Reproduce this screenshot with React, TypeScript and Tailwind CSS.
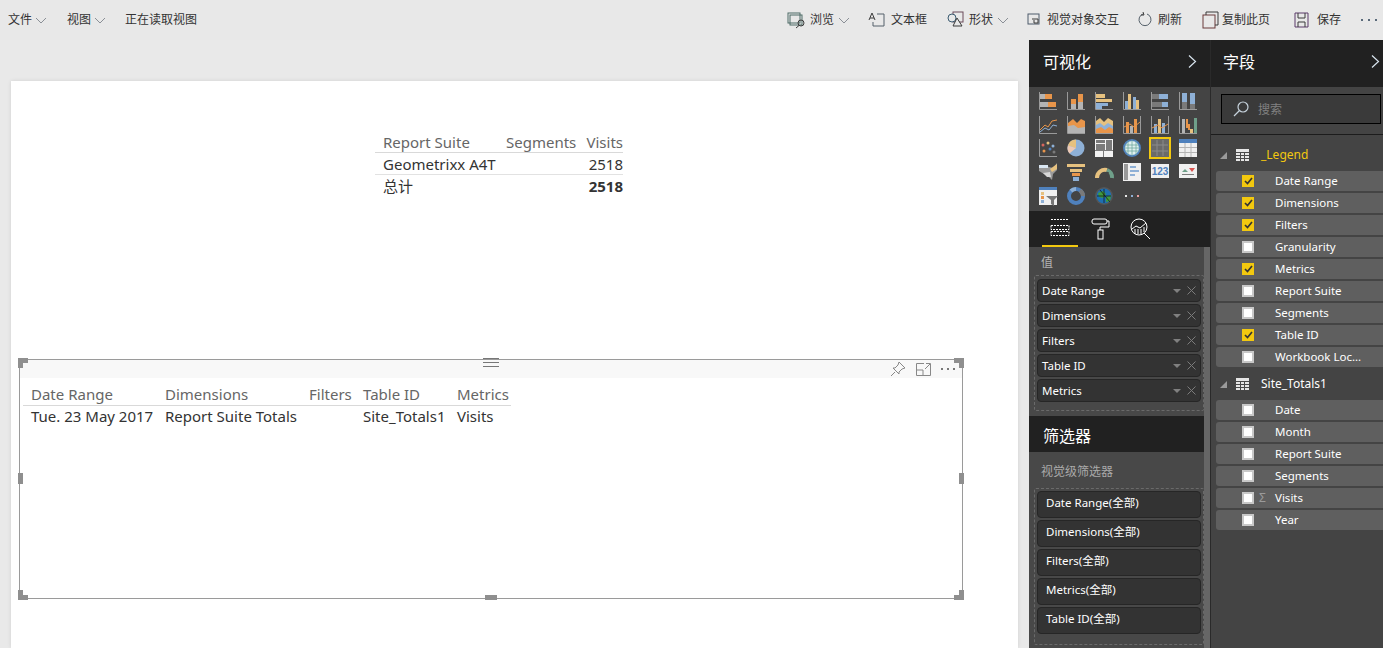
import { ReactNode } from 'react';

const font = { ui: 'font-["Noto_Sans","Noto_Sans_CJK_SC",sans-serif]' };

const O = '#e8954a';
const G = '#b4b4b4';
const T = '#e6c17f';
const B = '#8eb0d6';
const D = '#7a7a7a';
const AX = '#9a9a9a';

function R({ x, y, w, h, f }: { x: number; y: number; w: number; h: number; f: string }) {
  return <rect x={x} y={y} width={w} height={h} fill={f} />;
}

function Axes() {
  return <path d="M0.5 0V17.5H18" stroke={AX} fill="none" />;
}

const vizIcons: ReactNode[] = [
  <><Axes /><R x={1} y={2} w={5} h={5} f={G} /><R x={6} y={2} w={7} h={5} f={O} /><R x={1} y={10} w={8} h={5} f={G} /><R x={9} y={10} w={8} h={5} f={O} /></>,
  <><Axes /><R x={4} y={7} w={5} h={5} f={O} /><R x={4} y={12} w={5} h={5} f={G} /><R x={11} y={2} w={5} h={8} f={O} /><R x={11} y={10} w={5} h={7} f={G} /></>,
  <><Axes /><R x={1} y={2} w={9} h={4} f={T} /><R x={1} y={7} w={16} h={3} f={T} /><R x={1} y={11} w={12} h={3} f={B} /><R x={1} y={14} w={6} h={3} f={B} /></>,
  <><Axes /><R x={2} y={9} w={3} h={8} f={B} /><R x={5} y={2} w={3} h={15} f={T} /><R x={10} y={5} w={3} h={12} f={B} /><R x={13} y={8} w={3} h={9} f={T} /></>,
  <><Axes /><R x={1} y={2} w={7} h={5} f={D} /><R x={8} y={2} w={9} h={5} f={B} /><R x={1} y={10} w={10} h={5} f={D} /><R x={11} y={10} w={6} h={5} f={B} /></>,
  <><Axes /><R x={3} y={1} w={5} h={9} f={B} /><R x={3} y={10} w={5} h={7} f={D} /><R x={11} y={1} w={5} h={11} f={B} /><R x={11} y={12} w={5} h={5} f={D} /></>,
  <><Axes /><path d="M1 14L6 9L9 11L13 5L18 4" stroke={O} fill="none" /><path d="M1 16L6 12L10 14L14 9L18 10" stroke={B} fill="none" /></>,
  <><Axes /><path d="M1 17V7L6 3L10 7L14 3L18 5V17Z" fill={O} /><path d="M1 17V10L7 9L11 12L18 11V17Z" fill={G} /></>,
  <><Axes /><path d="M1 17V5L5 2L9 6L13 2L18 5V17Z" fill={T} /><path d="M1 15V9L5 7L9 10L13 7L18 10V15Z" fill={B} /><path d="M1 17V13L6 11L10 14L14 11L18 13V17Z" fill={O} /></>,
  <><path d="M.5 0V17.5H18M17.5 0V17" stroke={AX} fill="none" /><R x={3} y={6} w={3} h={11} f={O} /><R x={7} y={10} w={3} h={7} f={G} /><R x={11} y={3} w={3} h={14} f={O} /><path d="M1 11L7 8L11 11L17 6" stroke={O} fill="none" /></>,
  <><path d="M.5 0V17.5H18M17.5 0V17" stroke={AX} fill="none" /><R x={3} y={8} w={3} h={9} f={B} /><R x={7} y={3} w={3} h={14} f={T} /><R x={11} y={7} w={3} h={10} f={B} /><path d="M1 12L7 9L11 12L17 8" stroke={O} fill="none" /></>,
  <><Axes /><R x={3} y={3} w={3} h={14} f={G} /><R x={7} y={3} w={2} h={9} f={O} /><R x={9} y={8} w={2} h={6} f={O} /><R x={11} y={13} w={3} h={4} f={T} /><R x={15} y={2} w={3} h={15} f={'#6fa08a'} /></>,
  <><Axes /><circle cx="4" cy="6" r="1.5" fill="#d9665c" /><circle cx="9" cy="4" r="1.5" fill={T} /><circle cx="14" cy="7" r="1.5" fill={B} /><circle cx="5" cy="12" r="1.5" fill={O} /><circle cx="11" cy="10" r="1.5" fill={'#4f81bd'} /><circle cx="15" cy="13" r="1.5" fill={D} /></>,
  <><circle cx="9" cy="9" r="8.5" fill={B} /><path d="M9 9V.5A8.5 8.5 0 0 0 .9 6.5Z" fill={T} /><path d="M9 9L.9 6.5A8.5 8.5 0 0 0 2.5 14.5Z" fill="#edc9b5" /></>,
  <><rect width="18" height="18" fill="#f2f2f2" /><R x={1} y={1} w={9} h={3} f={D} /><R x={1} y={5} w={9} h={6} f={D} /><R x={11} y={1} w={6} h={10} f={D} /><path d="M0 11.5H18M8.5 11.5V18" stroke={D} /></>,
  <><circle cx="9" cy="9" r="8" fill="#dff0ee" stroke="#4f81bd" strokeWidth="2" /><path d="M2 6H16M1 9H17M2 12H16M9 1V17M5 2V16M13 2V16" stroke="#6fa8a0" strokeWidth=".8" fill="none" /></>,
  <><rect x="1" y="1" width="20" height="20" fill="#6a6a6a" stroke="#f2c80f" strokeWidth="2" /><path d="M3 8H19M3 14H19M8 3V19M14 3V19" stroke="#8a8a8a" /></>,
  <><rect width="18" height="18" fill="#f0f0f0" /><R x={0} y={0} w={18} h={4} f={'#4f81bd'} /><path d="M0 8.5H18M0 13.5H18M6 4V18M12 4V18" stroke={G} /></>,
  <><path d="M0 4L4 2L10 4L14 5L18 0V7L14 11L13 17L9 13L5 11L0 8Z" fill="#9a9a9a" /><path d="M0 2H9V5H0Z" fill="#d9e6f2" /><path d="M11 6L18 1V6L13 9Z" fill={T} /><path d="M4 10L11 9L12 14L8 14Z" fill="#d8d8d8" /></>,
  <><R x={0} y={1} w={18} h={3} f={T} /><R x={3} y={6} w={12} h={3} f={T} /><R x={5} y={10} w={8} h={3} f={O} /><R x={6} y={14} w={6} h={4} f={B} /></>,
  <><path d="M2 15A8 8 0 0 1 12 7" stroke={T} strokeWidth="4" fill="none" /><path d="M12 7A8 8 0 0 1 17 15" stroke="#6fa08a" strokeWidth="4" fill="none" /><path d="M11 15L13 9" stroke="#444" strokeWidth="2" /></>,
  <><rect width="18" height="18" fill="#f0f0f0" /><R x={1} y={1} w={4} h={16} f={'#9a9a9a'} /><R x={7} y={3} w={6} h={2} f={B} /><R x={7} y={7} w={9} h={2} f={B} /><R x={7} y={11} w={5} h={2} f={B} /></>,
  <><rect y="1" width="18" height="14" fill="#f0f0f0" /><text x="9" y="12" textAnchor="middle" fontSize="10" fontWeight="700" fill="#4f81bd" fontFamily="Liberation Sans">123</text></>,
  <><rect y="1" width="18" height="14" fill="#f0f0f0" /><path d="M3 9L6 6L9 9Z" fill="#6fa08a" /><path d="M10 5H16L13 9Z" fill="#d9534f" /><R x={3} y={11} w={12} h={1} f={D} /></>,
  <><rect width="18" height="18" fill="#f0f0f0" /><R x={0} y={0} w={18} h={3} f={'#4f81bd'} /><R x={2} y={5} w={3} h={3} f={T} /><R x={2} y={9} w={3} h={3} f={O} /><R x={2} y={13} w={3} h={3} f={B} /><path d="M7 9H19L15 13V19L12 17V13Z" fill="#777" /></>,
  <><circle cx="9" cy="9" r="7" fill="none" stroke="#4f81bd" strokeWidth="4" /><path d="M4 4A7 7 0 0 1 9 2" stroke={B} strokeWidth="4" fill="none" /><path d="M13 3.5A7 7 0 0 1 16 9" stroke={D} strokeWidth="4" fill="none" /></>,
  <><circle cx="9" cy="9" r="9" fill="#555" /><circle cx="9" cy="9" r="7.5" fill="#1f6fb2" /><path d="M3 6L8 4L11 7L8 11L4 10ZM11 10L16 8L15 14L11 15Z" fill="#3f9a3f" /><path d="M5 3L15 15M2 9H16M9 2V16" stroke="#111" strokeWidth=".7" /></>,
  <><R x={2} y={8} w={2} h={2} f={'#e8e8e8'} /><R x={8} y={8} w={2} h={2} f={'#8eb0d6'} /><R x={14} y={8} w={2} h={2} f={'#e8a0a0'} /></>,
];

function Chevron({ className = '' }: { className?: string }) {
  return (
    <svg width="12" height="7" viewBox="0 0 12 7" className={className} fill="none" stroke="#8a8f96">
      <path d="M1 1L6 6L11 1" />
    </svg>
  );
}

function TopIcon({ children, w = 18 }: { children: ReactNode; w?: number }) {
  return (
    <svg width={w} height="18" viewBox={`0 0 ${w} 18`} fill="none" stroke="#3b3b3b" strokeWidth="1">
      {children}
    </svg>
  );
}

function PanelChevron() {
  return (
    <svg width="9" height="13" viewBox="0 0 9 13" fill="none" stroke="#d8e4ee" strokeWidth="1.2">
      <path d="M1 .5L7.5 6.5L1 12.5" />
    </svg>
  );
}

function Handle({ className }: { className: string }) {
  return <div className={`absolute bg-[#8f8f8f] ${className}`} />;
}

// L shaped grip on the corners of the selected visual
function Corner({ className }: { className: string }) {
  return (
    <svg width="10" height="10" viewBox="0 0 10 10" className={`absolute ${className}`}>
      <path d="M0 0H10V5H5V10H0Z" fill="#8f8f8f" />
    </svg>
  );
}

function ValuePill({ label }: { label: string }) {
  return (
    <div className="flex h-[23px] items-center rounded-[4px] border border-[#262626] bg-[#333333] pl-[4px] pr-[3px] text-[11.5px] text-white">
      <span className="flex-1">{label}</span>
      <svg width="8" height="4" viewBox="0 0 8 4" className="mr-[6px]"><path d="M0 0H8L4 4Z" fill="#808080" /></svg>
      <svg width="9" height="9" viewBox="0 0 9 9" stroke="#7c7c7c" fill="none" className="mr-[1px]"><path d="M.5 .5L8.5 8.5M8.5 .5L.5 8.5" /></svg>
    </div>
  );
}

function FilterPill({ label }: { label: string }) {
  return (
    <div className="h-[27px] rounded-[4px] border border-[#262626] bg-[#333333] pl-[8px] text-[11.5px] leading-[22px] text-white">
      {label}
    </div>
  );
}

function Field({ label, checked, sigma }: { label: string; checked?: boolean; sigma?: boolean }) {
  return (
    <div className="flex h-[20px] items-center rounded-l-[3px] bg-[#5f5f5f] text-[11.5px] text-white">
      {checked ? (
        <span className="ml-[26px] flex h-[12px] w-[12px] items-center justify-center bg-[#f2c80f]">
          <svg width="9" height="8" viewBox="0 0 9 8" fill="none" stroke="#333" strokeWidth="1.7"><path d="M1 4L3.5 6.5L8 1" /></svg>
        </span>
      ) : (
        <span className="ml-[26px] h-[12px] w-[12px] border-2 border-[#c8c8c8] bg-white" />
      )}
      <span className="w-[21px] pl-[5px] text-[12px] text-[#9a9a9a]">{sigma ? 'Σ' : ''}</span>
      <span>{label}</span>
    </div>
  );
}

function TableGlyph() {
  return (
    <svg width="13" height="12" viewBox="0 0 13 12">
      <rect width="13" height="12" fill="#e6e6e6" />
      <path d="M0 3.5H13M0 6.5H13M0 9.5H13M4.5 3V12M8.5 3V12" stroke="#4a4a4a" />
    </svg>
  );
}

function GroupHeader({ label, yellow }: { label: string; yellow?: boolean }) {
  return (
    <div className="flex h-[20px] items-center pl-[4px] text-[12px]">
      <svg width="7" height="7" viewBox="0 0 7 7"><path d="M7 0V7H0Z" fill="#9a9a9a" /></svg>
      <span className="ml-[9px]"><TableGlyph /></span>
      <span className={`ml-[12px] ${yellow ? 'text-[#f2c80f]' : 'text-white'}`}>{label}</span>
    </div>
  );
}

export default function App() {
  return (
    <div className={`flex h-screen w-full flex-col overflow-hidden bg-[#e9e9e9] ${font.ui}`}>
      {/* ribbon */}
      <div className="flex h-[40px] items-center bg-[#e8e8e8] text-[12px] text-[#333333]">
        <span className="ml-[8px]">文件</span>
        <Chevron className="ml-[3px]" />
        <span className="ml-[20px]">视图</span>
        <Chevron className="ml-[3px]" />
        <span className="ml-[19px]">正在读取视图</span>
        <div className="ml-auto flex items-center">
          <TopIcon w={20}><rect x="1" y="2" width="12" height="10" stroke="#4d6b66" /><rect x="3" y="4" width="12" height="10" stroke="#4d6b66" /><circle cx="14" cy="12" r="3" /><path d="M12 14.5L9 17" /></TopIcon>
          <span className="ml-[3px]">浏览</span>
          <Chevron className="ml-[4px]" />
          <span className="ml-[18px] flex"><TopIcon w={18}><path d="M1 9L4 2L7 9M2 7H6" /><path d="M9 3H16V15H5V11" stroke="#55606a" /></TopIcon></span>
          <span className="ml-[5px]">文本框</span>
          <span className="ml-[20px] flex"><TopIcon w={17}><rect x="6" y="1" width="10" height="10" stroke="#6b4a5a" /><circle cx="5" cy="7" r="4" fill="#e8e8e8" stroke="#3a5a70" /><path d="M10 7L15 15H6Z" fill="#e8e8e8" /></TopIcon></span>
          <span className="ml-[5px]">形状</span>
          <Chevron className="ml-[4px]" />
          <span className="ml-[18px] flex"><TopIcon w={14}><rect x="1" y="3" width="11" height="10" stroke="#4d5a6b" /><path d="M5 8H11V12H7V9" /></TopIcon></span>
          <span className="ml-[6px]">视觉对象交互</span>
          <span className="ml-[19px] flex"><TopIcon w={14}><path d="M5 3A6 6 0 1 0 9 3" stroke="#55606a" /><path d="M5 1L6 4L3 4" /></TopIcon></span>
          <span className="ml-[6px]">刷新</span>
          <span className="ml-[20px] flex"><TopIcon w={17}><rect x="1" y="4" width="12" height="13" stroke="#6b3a3a" /><path d="M4 4V1H16V14H13" /></TopIcon></span>
          <span className="ml-[3px]">复制此页</span>
          <span className="ml-[24px] flex"><TopIcon w={15}><path d="M1 2H14V16H1Z" stroke="#5a3a6b" /><path d="M4 2V7H11V2M4 16V11H11V16" /></TopIcon></span>
          <span className="ml-[8px]">保存</span>
          <span className="ml-[20px] mr-[6px] flex gap-[5px]">
            <i className="h-[2px] w-[2px] bg-[#5a6a7a]" /><i className="h-[2px] w-[2px] bg-[#5a6a7a]" /><i className="h-[2px] w-[2px] bg-[#5a6a7a]" />
          </span>
        </div>
      </div>

      <div className="flex min-h-0 flex-1">
        {/* report canvas */}
        <div className="min-w-0 flex-1 px-[11px] pt-[41px]">
          <div className="relative h-full bg-white shadow-[0_0_4px_rgba(0,0,0,0.1)]">
            {/* top table */}
            <div className="absolute left-[364px] top-[52px] w-[248px] text-[15px] text-[#333333]">
              <div className="grid h-[20px] grid-cols-[131px_73px_44px] border-b border-[#d9d9d9] leading-[18px] text-[#666666]">
                <span className="pl-[8px]">Report Suite</span>
                <span>Segments</span>
                <span className="text-right">Visits</span>
              </div>
              <div className="flex h-[22px] items-center justify-between border-b border-[#e2e2e2] pl-[8px] pt-[2px]">
                <span>Geometrixx A4T</span>
                <span>2518</span>
              </div>
              <div className="flex h-[22px] items-center justify-between pl-[8px]">
                <span>总计</span>
                <span className="font-bold">2518</span>
              </div>
            </div>

            {/* selected table */}
            <div className="absolute left-[8px] top-[278px] h-[240px] w-[944px] border border-[#9a9a9a]">
              <div className="flex h-[18px] items-center justify-end gap-[10px] bg-[#f8f8f8] pr-[7px]">
                <svg width="16" height="16" viewBox="0 0 16 16" fill="none" stroke="#888"><path d="M9 1L15 7L12 8L9 11L9 13L3 7L5 7L8 4ZM5 11L1 15" /></svg>
                <svg width="15" height="13" viewBox="0 0 15 13" fill="none" stroke="#888"><path d="M8 .5H.5V12.5H14.5V5M.5 7H7V12.5M9 6L14 1M10 .5H14.5V5" /></svg>
                <span className="flex gap-[4px]"><i className="h-[2px] w-[2px] bg-[#777]" /><i className="h-[2px] w-[2px] bg-[#777]" /><i className="h-[2px] w-[2px] bg-[#777]" /></span>
              </div>
              <div className="ml-[3px] mt-[8px] w-[488px] text-[15px] text-[#333333]">
                <div className="grid h-[20px] grid-cols-[142px_144px_54px_94px_54px] border-b border-[#d9d9d9] leading-[16px] text-[#666666]">
                  <span className="pl-[8px]">Date Range</span>
                  <span>Dimensions</span>
                  <span>Filters</span>
                  <span>Table ID</span>
                  <span>Metrics</span>
                </div>
                <div className="grid h-[22px] grid-cols-[142px_144px_54px_94px_54px] leading-[21px]">
                  <span className="pl-[8px]">Tue. 23 May 2017</span>
                  <span>Report Suite Totals</span>
                  <span />
                  <span>Site_Totals1</span>
                  <span>Visits</span>
                </div>
              </div>
              <div className="absolute left-[463px] top-[-2px] flex w-[16px] flex-col gap-[3px]">
                <i className="h-[1px] bg-[#777]" /><i className="h-[1px] bg-[#777]" /><i className="h-[1px] bg-[#777]" />
              </div>
              <Corner className="left-[-2px] top-[-2px]" />
              <Corner className="right-[-2px] top-[-2px] rotate-90" />
              <Corner className="bottom-[-2px] left-[-2px] -rotate-90" />
              <Corner className="bottom-[-2px] right-[-2px] rotate-180" />
              <Handle className="left-[-2px] top-[113px] h-[11px] w-[5px]" />
              <Handle className="right-[-2px] top-[113px] h-[11px] w-[5px]" />
              <Handle className="bottom-[-2px] left-[465px] h-[5px] w-[12px]" />
            </div>
          </div>
        </div>

        {/* visualizations pane */}
        <div className="flex w-[181px] flex-none flex-col bg-[#484848]">
          <div className="flex h-[47px] flex-none items-center justify-between bg-[#212121] pb-[4px] pl-[14px] pr-[13px] text-[16px] text-white">
            <span>可视化</span>
            <PanelChevron />
          </div>
          <div className="grid h-[124px] flex-none grid-cols-[repeat(6,28px)] grid-rows-[repeat(5,23.7px)] bg-[#444444] pl-[10px] pt-[5px]">
            {vizIcons.map((icon, i) => (
              <div key={i} className={i === 16 ? '-ml-[2px] -mt-[2px]' : ''}>
                <svg
                  width={i === 16 ? 22 : 18}
                  height={i === 16 ? 22 : 18}
                  viewBox={i === 16 ? '0 0 22 22' : '0 0 18 18'}
                  className="overflow-visible"
                >
                  {icon}
                </svg>
              </div>
            ))}
          </div>
          <div className="flex h-[36px] flex-none items-start bg-[#212121] pl-[13px]">
            <div className="flex h-[36px] w-[36px] items-center justify-center border-b-2 border-[#f2c80f] pb-[3px]">
              <svg width="20" height="20" viewBox="0 0 20 20" fill="none" stroke="#fff" strokeDasharray="2 1">
                <path d="M1 2.5H19M1 8.5H19V12.5H1ZM1 14.5H19V18.5H1Z" />
              </svg>
            </div>
            <span className="ml-[13px] mt-[7px]">
              <svg width="19" height="22" viewBox="0 0 19 22" fill="none" stroke="#fff"><rect x="1" y="1" width="15" height="5" rx="2" /><path d="M16 3H18V9H9V12" /><rect x="7" y="12" width="5" height="9" /></svg>
            </span>
            <span className="ml-[20px] mt-[7px]">
              <svg width="21" height="22" viewBox="0 0 21 22" fill="none" stroke="#fff"><circle cx="9" cy="9" r="8" /><path d="M14 15L20 21" /><path d="M2 11L6 8L10 10L16 5" /><path d="M5 11V16M8 11V16M11 11V16M14 9V14" /></svg>
            </span>
          </div>

          <div className="flex min-h-0 flex-1">
            <div className="min-w-0 flex-1">
              <div className="h-[169px] bg-[#484848] pl-[5px] pt-[7px]">
                <div className="pl-[7px] text-[12px] leading-[18px] text-[#b4b4b4]">值</div>
                <div className="mt-[3px] flex h-[136px] w-[170px] flex-col gap-[2px] rounded-[2px] border border-dashed border-[#6a6a6a] px-[2px] pt-[3px]">
                  {['Date Range', 'Dimensions', 'Filters', 'Table ID', 'Metrics'].map((v) => (
                    <ValuePill key={v} label={v} />
                  ))}
                </div>
              </div>
              <div className="flex h-[36px] items-center bg-[#212121] pl-[14px] pt-[3px] text-[16px] text-white">筛选器</div>
              <div className="pl-[5px] pt-[10px]">
                <div className="pl-[7px] text-[12px] leading-[20px] text-[#aaaaaa]">视觉级筛选器</div>
                <div className="mt-[6px] flex h-[157px] w-[170px] flex-col gap-[2px] rounded-[2px] border border-dashed border-[#6a6a6a] px-[2px] pt-[2px]">
                  {['Date Range(全部)', 'Dimensions(全部)', 'Filters(全部)', 'Metrics(全部)', 'Table ID(全部)'].map((v) => (
                    <FilterPill key={v} label={v} />
                  ))}
                </div>
              </div>
            </div>
            <div className="w-[6px] flex-none bg-[#666666]" />
          </div>
        </div>

        {/* fields pane */}
        <div className="flex w-[173px] flex-none flex-col border-l border-[#2a2a2a] bg-[#444444]">
          <div className="flex h-[47px] flex-none items-center justify-between bg-[#212121] pb-[4px] pl-[12px] pr-[3px] text-[16px] text-white">
            <span>字段</span>
            <PanelChevron />
          </div>
          <div className="h-[48px] flex-none border-b border-[#1c1c1c] pl-[10px] pt-[7px]">
            <div className="flex h-[30px] w-[160px] items-center border border-black bg-[#3a3a3a] pl-[11px] text-[12px] text-[#808080]">
              <svg width="16" height="16" viewBox="0 0 16 16" fill="none" stroke="#c6d2dc" strokeWidth="1.2"><circle cx="10" cy="6" r="5" /><path d="M6.5 9.5L1 15" /></svg>
              <span className="ml-[9px] pt-[1px]">搜索</span>
            </div>
          </div>
          <div className="pl-[5px] pt-[10px]">
            <GroupHeader label="_Legend" yellow />
            <div className="mt-[6px] flex flex-col gap-[2px]">
              <Field label="Date Range" checked />
              <Field label="Dimensions" checked />
              <Field label="Filters" checked />
              <Field label="Granularity" />
              <Field label="Metrics" checked />
              <Field label="Report Suite" />
              <Field label="Segments" />
              <Field label="Table ID" checked />
              <Field label="Workbook Loc..." />
            </div>
            <div className="mt-[7px]"><GroupHeader label="Site_Totals1" /></div>
            <div className="mt-[6px] flex flex-col gap-[2px]">
              <Field label="Date" />
              <Field label="Month" />
              <Field label="Report Suite" />
              <Field label="Segments" />
              <Field label="Visits" sigma />
              <Field label="Year" />
            </div>
          </div>
        </div>
      </div>
    </div>
  );
}
